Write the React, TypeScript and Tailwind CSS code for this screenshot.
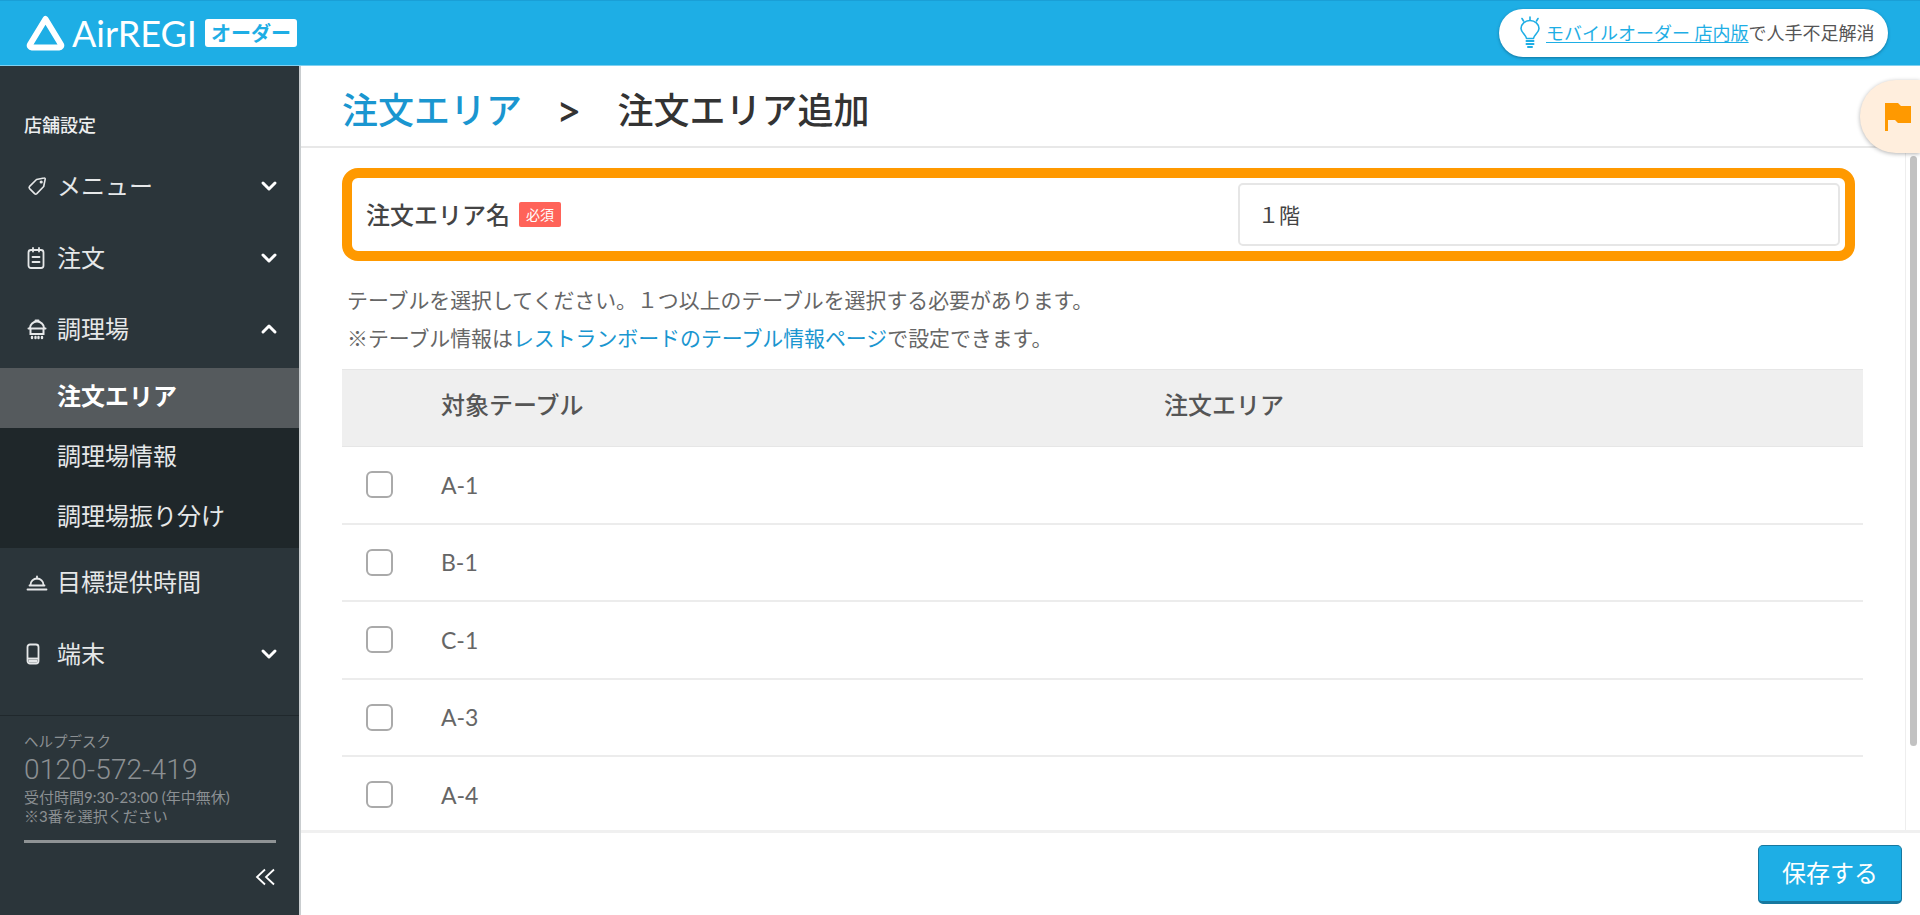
import { ChevronDown, ChevronUp } from "lucide-react";

const rows = ["A-1", "B-1", "C-1", "A-3", "A-4"];

function LogoMark() {
  return (
    <svg width="39" height="37" viewBox="0 0 39 37" fill="none">
      <path
        d="M19.5 4 L35 29.5 a2 2 0 0 1 -1.8 3 H5.8 a2 2 0 0 1 -1.8 -3 Z"
        stroke="#fff"
        strokeWidth="6"
        strokeLinejoin="round"
      />
    </svg>
  );
}

function TagIcon() {
  return (
    <svg width="22" height="22" viewBox="0 0 22 22" fill="none" stroke="#e6e8e9" strokeWidth="1.6">
      <path d="M10.5 4.5 L18 3 a1 1 0 0 1 1.2 1.2 L17.7 11.5 L10.8 18.6 a1.6 1.6 0 0 1 -2.2 0 L3.6 13.6 a1.6 1.6 0 0 1 0 -2.2 Z" strokeLinejoin="round" />
      <circle cx="15.2" cy="7" r="0.8" fill="#e6e8e9" />
    </svg>
  );
}

function ClipboardIcon() {
  return (
    <svg width="20" height="24" viewBox="0 0 20 24" fill="none" stroke="#e6e8e9" strokeWidth="1.8" strokeLinecap="round">
      <rect x="2.5" y="4" width="15" height="18" rx="2.5" />
      <path d="M7 2v3.5M13 2v3.5M6.5 11h7M6.5 16h7" />
    </svg>
  );
}

function PotIcon() {
  return (
    <svg width="22" height="22" viewBox="0 0 22 22" fill="none" stroke="#e6e8e9" strokeWidth="2" strokeLinecap="round">
      <path d="M4 10 a7 6.5 0 0 1 14 0" />
      <path d="M9.5 2.5h3" />
      <path d="M2.5 10.5h17M4.5 10.5v5.5h13v-5.5" />
      <path d="M6 19v1M9.5 19v1M12.5 19v1M16 19v1" strokeWidth="2.4" />
    </svg>
  );
}

function ClocheIcon() {
  return (
    <svg width="22" height="20" viewBox="0 0 22 20" fill="none" stroke="#e6e8e9" strokeWidth="1.8" strokeLinecap="round">
      <path d="M4.5 13 a6.5 6.5 0 0 1 13 0" />
      <path d="M11 4.5v2" />
      <path d="M3.5 13.5h15M1.5 17.5h19" />
    </svg>
  );
}

function PhoneIcon() {
  return (
    <svg width="14" height="22" viewBox="0 0 14 22" fill="none" stroke="#e6e8e9" strokeWidth="1.8">
      <rect x="1.5" y="1.5" width="11" height="19" rx="2.5" />
      <path d="M1.5 15.5h11" />
      <path d="M2.5 16.5h9v3h-9z" fill="#e6e8e9" stroke="none" />
    </svg>
  );
}

function BulbIcon() {
  return (
    <svg width="22" height="34" viewBox="0 0 22 34" fill="none" stroke="#1eaee5" strokeWidth="1.6" strokeLinecap="round">
      <path d="M7.5 22.5 C7 18.5 2 16.5 2 12.5 a9 8 0 0 1 18 0 C20 16.5 15 18.5 14.5 22.5 Z" strokeLinejoin="round" />
      <path d="M3 2.5l1.5 2.5M11 1v3M19 2.5l-1.5 2.5" />
      <path d="M7.5 25h7M7.5 28h7M9 31h4" strokeWidth="2" />
    </svg>
  );
}

function NavItem({ icon, label, chevron, className }: { icon: React.ReactNode; label: string; chevron?: "up" | "down"; className: string }) {
  return (
    <div className={`flex items-center pr-[18px] pl-[26px] text-[24px] text-[#e6e8e9] ${className}`}>
      <span className="flex w-[31px] shrink-0 items-center">{icon}</span>
      <span>{label}</span>
      {chevron === "down" && <ChevronDown className="ml-auto h-[24px] w-[24px]" color="#fff" strokeWidth={3} />}
      {chevron === "up" && <ChevronUp className="ml-auto h-[24px] w-[24px]" color="#fff" strokeWidth={3} />}
    </div>
  );
}

function Sidebar() {
  return (
    <aside className="flex h-[849px] w-[301px] shrink-0 flex-col border-r-2 border-[#c9cdcf] bg-[#2b353a]">
      <div className="flex h-[84px] items-end pb-[12px] pl-[24px] text-[18px] leading-[26px] font-medium text-[#eceeef]">店舗設定</div>
      <NavItem icon={<TagIcon />} label="メニュー" chevron="down" className="h-[72px]" />
      <NavItem icon={<ClipboardIcon />} label="注文" chevron="down" className="h-[72px]" />
      <NavItem icon={<PotIcon />} label="調理場" chevron="up" className="h-[74px] pb-[4px]" />
      <div className="bg-[#1f272a] text-[24px] text-[#e6e8e9]">
        <div className="flex h-[60px] items-center bg-[#555a5d] pb-[4px] pl-[57px] font-bold text-white">注文エリア</div>
        <div className="flex h-[60px] items-center pb-[4px] pl-[57px]">調理場情報</div>
        <div className="flex h-[60px] items-center pb-[4px] pl-[57px]">調理場振り分け</div>
      </div>
      <NavItem icon={<ClocheIcon />} label="目標提供時間" className="h-[70px] pb-[2px]" />
      <NavItem icon={<PhoneIcon />} label="端末" chevron="down" className="h-[72px]" />
      <div className="mt-auto h-[200px] border-t border-[#20282c] px-[24px] pt-[16px] text-[#8b9093]">
        <p className="text-[14.5px] leading-[20px]">ヘルプデスク</p>
        <p className="font-[Roboto,sans-serif] text-[28px] leading-[36px] font-light tracking-[0.2px]">0120-572-419</p>
        <p className="text-[15px] leading-[18px] whitespace-nowrap">受付時間9:30-23:00 (年中無休)</p>
        <p className="text-[15px] leading-[20px]">※3番を選択ください</p>
        <div className="mt-[14px] h-[3px] w-[252px] bg-[#8f9395]" />
        <div className="mt-[25px] flex justify-end">
          <svg width="20" height="18" viewBox="0 0 20 18" fill="none" stroke="#fff" strokeWidth="1.8">
            <path d="M10 1.5 L2 9 L10 16.5M19 1.5 L11 9 L19 16.5" />
          </svg>
        </div>
      </div>
    </aside>
  );
}

function Header() {
  return (
    <header className="flex h-[66px] items-center border-t border-b border-t-[#1a9fd6] border-b-[#7fd0f0] bg-[#1eaee5] pr-[32px] pl-[26px]">
      <LogoMark />
      <span className="ml-[7px] font-[Lato,sans-serif] text-[36px] leading-none text-white">AirREGI</span>
      <span className="ml-[8px] flex h-[28px] w-[92px] items-center justify-center rounded-[3px] bg-white text-[20px] leading-none font-bold text-[#1eaee5]">オーダー</span>
      <div className="ml-auto flex h-[48px] w-[389px] items-center rounded-full bg-white pl-[20px] text-[18px] text-[#555] shadow-[0_1px_3px_rgba(0,60,90,0.5)]">
        <BulbIcon />
        <span className="ml-[5px] text-[#1eaee5] underline underline-offset-2">モバイルオーダー 店内版</span>
        <span>で人手不足解消</span>
      </div>
    </header>
  );
}

function Content() {
  return (
    <main className="relative flex h-[849px] min-w-0 flex-1 flex-col bg-white">
      <div className="flex h-[82px] shrink-0 items-center border-b-2 border-[#e8e8e8] pt-[7px] pl-[41px] text-[36px] leading-none font-medium text-[#333]">
        <span className="text-[#1a96d0]">注文エリア</span>
        <span className="ml-[34px] font-[Lato,sans-serif] text-[44px] leading-none font-medium">&gt;</span>
        <span className="ml-[36px]">注文エリア追加</span>
      </div>

      <div className="absolute top-[14px] right-0 z-10 flex h-[73px] w-[60px] items-center rounded-l-[36px] bg-[#ffeedd] pl-[25px] shadow-[0_1px_4px_rgba(0,0,0,0.3)]">
        <svg width="26" height="28" viewBox="0 0 26 28" fill="#ff9900">
          <path d="M0 0h13l3 3h10v17H13l-3-3H3v11H0z" />
        </svg>
      </div>

      <div className="flex min-h-0 flex-1">
        <div className="min-w-0 flex-1 overflow-hidden">
          <div className="mt-[20px] ml-[41px] flex h-[93px] w-[1513px] items-center rounded-[16px] border-[10px] border-[#ff9900] pr-[5px] pl-[14px]">
            <span className="text-[24px] font-medium text-[#444]">注文エリア名</span>
            <span className="ml-[9px] flex h-[25px] w-[42px] items-center justify-center rounded-[2px] bg-[#ff6359] text-[14px] leading-none text-white">必須</span>
            <div className="ml-auto flex h-[63px] w-[602px] items-center rounded-[5px] border-2 border-[#e6e6e6] pl-[18px] text-[21px] text-[#444]">１階</div>
          </div>

          <div className="mt-[20px] ml-[46px] text-[20.9px] leading-[37.5px] text-[#666]">
            <p>テーブルを選択してください。１つ以上のテーブルを選択する必要があります。</p>
            <p>
              ※テーブル情報は<span className="text-[#1a96d0]">レストランボードのテーブル情報ページ</span>で設定できます。
            </p>
          </div>

          <div className="mt-[13px] ml-[41px] w-[1521px]">
            <div className="flex h-[78px] items-center border-y border-[#e6e6e6] bg-[#efefef] pb-[6px] text-[24px] font-medium text-[#555]">
              <span className="ml-[99px] w-[723px]">対象テーブル</span>
              <span>注文エリア</span>
            </div>
            {rows.map((r) => (
              <div key={r} className="flex h-[77.5px] items-center border-b-2 border-[#ececec] text-[23px] text-[#666]">
                <span className="ml-[24px] h-[27px] w-[27px] rounded-[6px] border-2 border-[#aaa] bg-white" />
                <span className="ml-[48px]">{r}</span>
              </div>
            ))}
          </div>
        </div>
        <div className="w-[15px] shrink-0 border-l border-[#eee] pt-[8px] pl-[4px]">
          <div className="h-[590px] w-[7px] rounded-full bg-[#c2c2c2]" />
        </div>
      </div>

      <footer className="flex h-[85px] shrink-0 items-center justify-end border-t-[3px] border-[#f0f0f0] pr-[18px]">
        <button className="flex h-[59px] w-[144px] items-center justify-center rounded-[5px] border border-b-[3px] border-[#17789f] bg-[#1eaee5] text-[24px] text-white">保存する</button>
      </footer>
    </main>
  );
}

export default function App() {
  return (
    <div className="h-[915px] w-[1920px] overflow-hidden bg-white font-['Lato','Noto_Sans_CJK_JP',sans-serif]">
      <Header />
      <div className="flex">
        <Sidebar />
        <Content />
      </div>
    </div>
  );
}
